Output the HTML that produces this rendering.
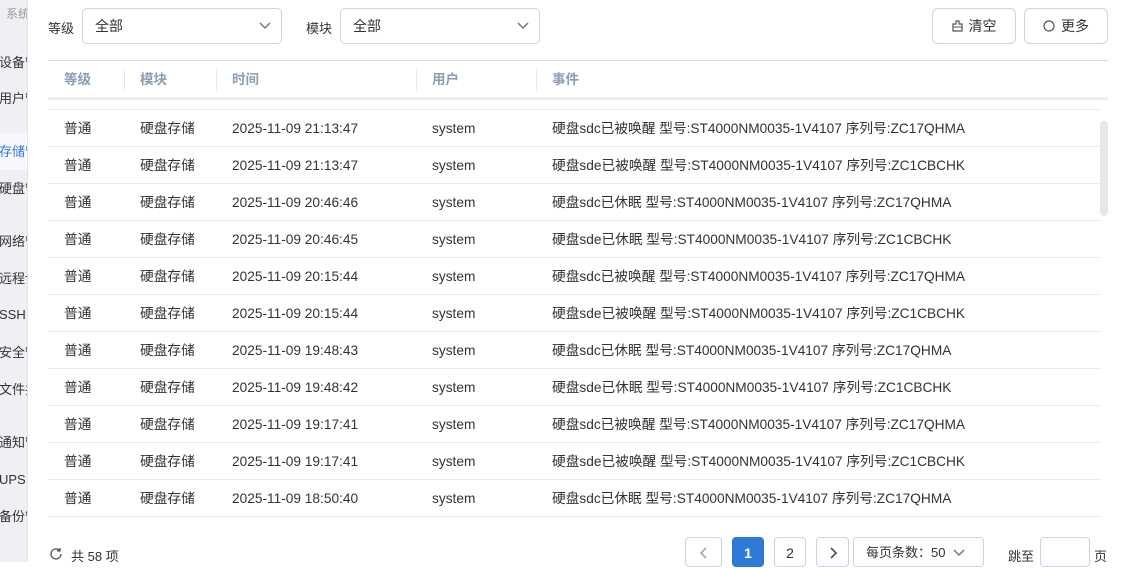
<!DOCTYPE html><html><head><meta charset="utf-8"><style>
*{box-sizing:border-box;margin:0;padding:0}
body{width:1123px;height:562px;overflow:hidden;background:#fff;font-family:"Liberation Sans","Noto Sans CJK SC",sans-serif;font-size:13px;color:#333;position:relative}
.sb{position:absolute;left:0;top:0;width:28px;height:562px;background:#eef0f4;border-right:1px solid #e2e5ea;overflow:hidden}
.sb div{position:absolute;left:-1px;white-space:nowrap;font-size:13px;color:#333;line-height:16px}
.abs{position:absolute}
.sel{position:absolute;height:36px;border:1px solid #d0d4da;border-radius:5px;background:#fff;padding-left:12px;line-height:34px;font-size:14px}
.btn{position:absolute;height:36px;border:1px solid #d0d4da;border-radius:6px;background:#fff;line-height:34px;font-size:14px;text-align:center}
.row{position:absolute;left:48px;width:1052px;height:37px;border-bottom:1px solid #e8eaee;font-size:13.7px}
.row span{position:absolute;top:1px;line-height:36px;white-space:nowrap}
.pg{position:absolute;top:537px;height:30px;border:1px solid #d0d4da;border-radius:4px;background:#fff;text-align:center;line-height:30px;font-size:14px}
.hd span{position:absolute;top:1px;line-height:36px}
</style></head><body>
<div class="sb">
<div style="top:6px;left:6px;color:#999;font-size:12px">系统</div>
<div style="top:55px">设备管</div>
<div style="top:91px">用户管</div>
<div style="top:133px;height:37px;width:40px;background:#f7f8fa"></div>
<div style="top:144px;color:#2e7ad6">存储管</div>
<div style="top:181px">硬盘管</div>
<div style="top:234px">网络管</div>
<div style="top:271px">远程访</div>
<div style="top:307px">SSH</div>
<div style="top:345px">安全管</div>
<div style="top:382px">文件共</div>
<div style="top:435px">通知管</div>
<div style="top:472px">UPS</div>
<div style="top:509px">备份管</div>
</div>
<div class="abs" style="left:48px;top:18px;font-size:13px">等级</div>
<div class="sel" style="left:82px;top:8px;width:200px">全部<svg class="abs" style="right:10px;top:13px" width="12" height="8" viewBox="0 0 12 8"><path d="M1 1l5 5 5-5" stroke="#777" stroke-width="1.5" fill="none"/></svg></div>
<div class="abs" style="left:306px;top:18px;font-size:13px">模块</div>
<div class="sel" style="left:340px;top:8px;width:200px">全部<svg class="abs" style="right:10px;top:13px" width="12" height="8" viewBox="0 0 12 8"><path d="M1 1l5 5 5-5" stroke="#777" stroke-width="1.5" fill="none"/></svg></div>
<div class="btn" style="left:932px;top:8px;width:84px"><svg style="vertical-align:-1px;margin-right:6px" width="11" height="12" viewBox="0 0 11 12"><path d="M4 1h3v3h3v7H1V4h3z" stroke="#555" stroke-width="1.2" fill="none"/><path d="M1 7h9" stroke="#555"/></svg>清空</div>
<div class="btn" style="left:1024px;top:8px;width:84px"><svg style="vertical-align:-1px;margin-right:6px" width="12" height="12" viewBox="0 0 12 12"><circle cx="6" cy="6" r="5" stroke="#555" stroke-width="1.2" fill="none"/></svg>更多</div>
<div class="abs" style="left:48px;top:60px;width:1060px;height:1px;background:#d8dbe0"></div>
<div class="abs hd" style="left:48px;top:61px;width:1060px;height:37px;font-weight:bold;color:#8b9cb3;font-size:13.5px">
<span style="left:16px">等级</span><span style="left:92px">模块</span><span style="left:184px">时间</span><span style="left:384px">用户</span><span style="left:504px">事件</span>
<i class="abs" style="left:76px;top:8px;width:1px;height:22px;background:#e6e8ec"></i><i class="abs" style="left:168px;top:8px;width:1px;height:22px;background:#e6e8ec"></i><i class="abs" style="left:368px;top:8px;width:1px;height:22px;background:#e6e8ec"></i><i class="abs" style="left:488px;top:8px;width:1px;height:22px;background:#e6e8ec"></i>
</div>
<div class="abs" style="left:48px;top:97px;width:1060px;height:3px;background:#eceef1"></div>
<div class="abs" style="left:48px;top:109px;width:1052px;height:1px;background:#e8eaee"></div>
<div class="abs" style="left:1100px;top:121px;width:8px;height:95px;border-radius:4px;background:#e4e7ec"></div>
<div id="rows"></div>
<svg class="abs" style="left:49px;top:547px" width="14" height="14" viewBox="0 0 14 14"><path d="M12 7a5 5 0 1 1-1.5-3.6M11 1v3H8" stroke="#555" stroke-width="1.3" fill="none"/></svg>
<div class="abs" style="left:71px;top:546px;font-size:13px">共 58 项</div>
<div class="pg" style="left:685px;width:37px"><svg width="10" height="14" viewBox="0 0 10 14" style="vertical-align:-2px"><path d="M7 2L2 7l5 5" stroke="#aab" stroke-width="1.8" fill="none"/></svg></div>
<div class="pg" style="left:732px;width:32px;background:#2e7ad6;border-color:#2e7ad6;color:#fff;font-weight:bold">1</div>
<div class="pg" style="left:774px;width:32px">2</div>
<div class="pg" style="left:816px;width:33px"><svg width="10" height="14" viewBox="0 0 10 14" style="vertical-align:-2px"><path d="M3 2l5 5-5 5" stroke="#556" stroke-width="1.8" fill="none"/></svg></div>
<div class="pg" style="left:853px;width:131px;text-align:left;padding-left:12px;font-size:13px">每页条数：50 <svg width="12" height="8" viewBox="0 0 12 8" style="margin-left:4px"><path d="M1 1l5 5 5-5" stroke="#777" stroke-width="1.5" fill="none"/></svg></div>
<div class="abs" style="left:1008px;top:546px;font-size:13px">跳至</div>
<div class="pg" style="left:1040px;width:50px"></div>
<div class="abs" style="left:1094px;top:546px;font-size:13px">页</div>
<script>
var d=[["21:13:47","硬盘sdc已被唤醒","ZC17QHMA"],["21:13:47","硬盘sde已被唤醒","ZC1CBCHK"],["20:46:46","硬盘sdc已休眠","ZC17QHMA"],["20:46:45","硬盘sde已休眠","ZC1CBCHK"],["20:15:44","硬盘sdc已被唤醒","ZC17QHMA"],["20:15:44","硬盘sde已被唤醒","ZC1CBCHK"],["19:48:43","硬盘sdc已休眠","ZC17QHMA"],["19:48:42","硬盘sde已休眠","ZC1CBCHK"],["19:17:41","硬盘sdc已被唤醒","ZC17QHMA"],["19:17:41","硬盘sde已被唤醒","ZC1CBCHK"],["18:50:40","硬盘sdc已休眠","ZC17QHMA"]];
var h="";d.forEach(function(r,i){h+='<div class="row" style="top:'+(110+i*37)+'px"><span style="left:16px">普通</span><span style="left:92px">硬盘存储</span><span style="left:184px">2025-11-09 '+r[0]+'</span><span style="left:384px">system</span><span style="left:504px">'+r[1]+' 型号:ST4000NM0035-1V4107 序列号:'+r[2]+'</span></div>'});
document.getElementById("rows").innerHTML=h;
</script>
</body></html>
